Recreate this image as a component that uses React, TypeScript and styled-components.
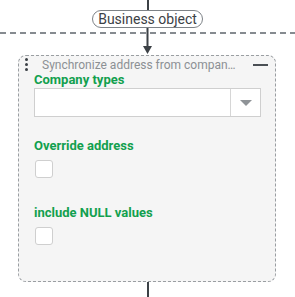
import React from "react";
import styled, { createGlobalStyle } from "styled-components";

const GlobalStyle = createGlobalStyle`
  body {
    margin: 0;
    background: #ffffff;
    font-family: Roboto, "Liberation Sans", sans-serif;
  }
`;

const Page = styled.div`
  width: 295px;
  height: 297px;
  display: flex;
  flex-direction: column;
  align-items: center;
  overflow: hidden;
  & > * {
    flex-shrink: 0;
  }
`;

const Stem = styled.div<{ $h: number }>`
  width: 2px;
  height: ${(p) => p.$h}px;
  background: #3c4146;
`;

const Pill = styled.div`
  height: 18px;
  box-sizing: border-box;
  padding: 0 5px;
  border: 1px solid #7d8287;
  border-radius: 10px;
  background: #fff;
  color: #3c4146;
  font-size: 14px;
  line-height: 16px;
  display: flex;
  align-items: center;
`;

const Junction = styled.div`
  position: relative;
  width: 100%;
  height: 27px;
`;

const DashedRule = styled.div`
  margin-top: 4px;
  height: 2px;
  background: repeating-linear-gradient(
    to right,
    #868b90 0 6px,
    transparent 6px 10px
  );
`;

const Arrow = styled.svg`
  position: absolute;
  left: 142px;
  top: 0;
`;

const Card = styled.div`
  align-self: flex-start;
  margin-left: 18px;
  width: 258px;
  height: 227px;
  box-sizing: border-box;
  border: 1px dashed #9a9ea2;
  border-radius: 8px;
  background: #f5f5f5;
  display: flex;
  flex-direction: column;
`;

const Header = styled.div`
  display: flex;
  align-items: center;
  height: 15px;
  padding: 1px 6px 0 6px;
`;

const Handle = styled.div`
  width: 3px;
  display: flex;
  flex-direction: column;
  gap: 2px;
  margin-right: 14px;
  span {
    width: 3px;
    height: 3px;
    border-radius: 50%;
    background: #3c4146;
  }
`;

const Title = styled.div`
  flex: 1;
  min-width: 0;
  color: #8c9094;
  font-size: 12px;
  white-space: nowrap;
  overflow: hidden;
  text-overflow: ellipsis;
  padding-right: 16px;
`;

const Minus = styled.div`
  width: 15px;
  height: 2px;
  background: #4a4f54;
  margin-right: 1px;
`;

const Body = styled.div`
  padding: 0 15px;
  display: flex;
  flex-direction: column;
`;

const Label = styled.div<{ $top: number }>`
  margin-top: ${(p) => p.$top}px;
  color: #12a04e;
  font-weight: 700;
  font-size: 13px;
  line-height: 16px;
`;

const Select = styled.div`
  margin-right: -1px;
  height: 29px;
  box-sizing: border-box;
  border: 1px solid #cfcfcf;
  background: #fff;
  display: flex;
`;

const SelectValue = styled.div`
  flex: 1;
`;

const Caret = styled.div`
  width: 29px;
  border-left: 1px solid #d6d6d6;
  display: flex;
  align-items: center;
  justify-content: center;
  &::after {
    content: "";
    border-left: 6px solid transparent;
    border-right: 6px solid transparent;
    border-top: 6px solid #8f9397;
  }
`;

const Checkbox = styled.div`
  margin-top: 6px;
  margin-left: 1px;
  width: 18px;
  height: 18px;
  box-sizing: border-box;
  border: 1px solid #cfcfcf;
  border-radius: 3px;
  background: #fff;
`;

export default function App() {
  return (
    <Page>
      <GlobalStyle />
      <Stem $h={10} />
      <Pill>Business object</Pill>
      <Junction>
        <DashedRule />
        <Arrow width="11" height="27" viewBox="0 0 11 27">
          <rect x="4.5" y="0" width="2" height="19" fill="#3c4146" />
          <polygon points="1,18 10,18 5.5,26" fill="#3c4146" />
        </Arrow>
      </Junction>
      <Card>
        <Header>
          <Handle>
            <span />
            <span />
            <span />
          </Handle>
          <Title>Synchronize address from company types</Title>
          <Minus />
        </Header>
        <Body>
          <Label $top={0}>Company types</Label>
          <Select>
            <SelectValue />
            <Caret />
          </Select>
          <Label $top={21}>Override address</Label>
          <Checkbox />
          <Label $top={27}>include NULL values</Label>
          <Checkbox />
        </Body>
      </Card>
      <Stem $h={15} />
    </Page>
  );
}
